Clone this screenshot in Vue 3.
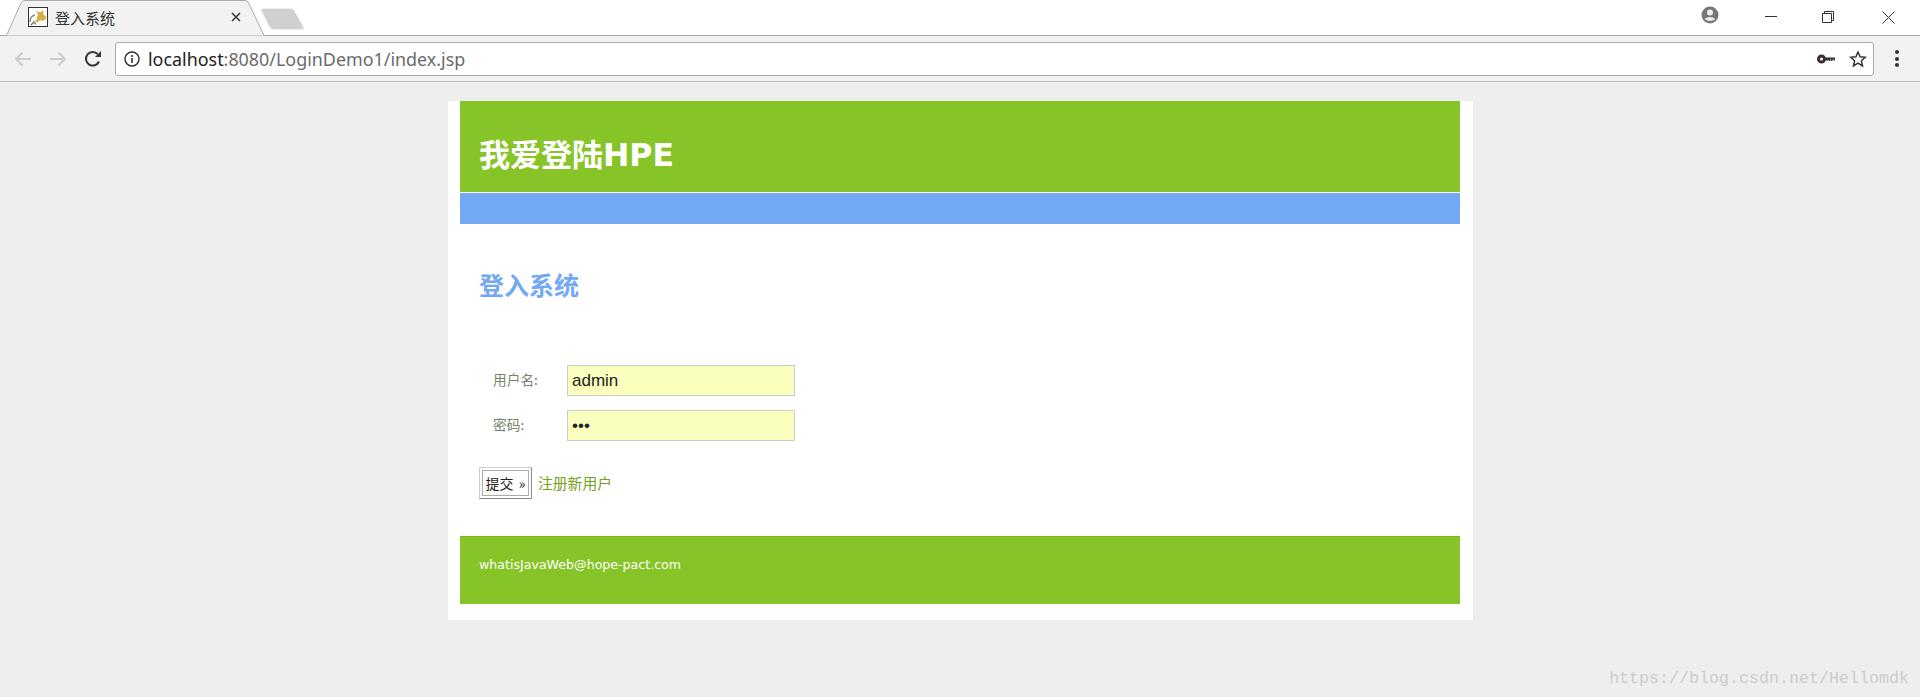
<template>
  <div class="browser">
    <div class="tabstrip">
      <div class="tab">
        <svg class="tab__shape" width="270" height="36" viewBox="0 0 270 36">
          <path d="M0 35.5H6.5L21 3Q22.2.5 25 .5H245Q247.5.5 248.6 3L264 35.5H270" fill="#f2f2f2" stroke="#aaa" />
        </svg>
        <svg class="tab__icon" width="20" height="20" viewBox="0 0 20 20">
          <rect x=".5" y=".5" width="19" height="19" fill="#fff" stroke="#3a3035" />
          <path d="M8 3l2 2h3l2-2 .5 4.500 2.500 2-.5 3-3.500 1.500-1.500-1-3.500 2.500-2.500-1.500 3-2-1-1.500 1.500-2.500z" fill="#d9ae45" />
          <path d="M2 15q0-6 5-7" fill="none" stroke="#8a8a8a" stroke-width="1.500" />
          <path d="M3 18l3-3 2 2.500" fill="none" stroke="#666" stroke-width="1.200" />
        </svg>
        <span class="tab__title">登入系统</span>
        <svg class="tab__close" width="10" height="10" viewBox="0 0 10 10">
          <path d="M1 1l8 8M9 1l-8 8" stroke="#3a3035" stroke-width="1.500" />
        </svg>
      </div>
      <svg class="newtab" width="44" height="22" viewBox="0 0 44 22">
        <path d="M2 1H30Q32 1 33 3L42 19Q43 21 41 21H12Q10 21 9 19L1 3Q0 1 2 1z" fill="#cfcfcf" stroke="#d8d8d8" />
      </svg>
      <div class="winctl">
        <svg width="18" height="18" viewBox="0 0 18 18" class="winctl__user">
          <circle cx="9" cy="9" r="8.500" fill="#777" />
          <circle cx="9" cy="6.500" r="3" fill="#eee" />
          <path d="M3.500 13q5.500-4 11 0q-5.500 4-11 0z" fill="#eee" />
        </svg>
        <svg width="12" height="12" viewBox="0 0 12 12" class="winctl__min">
          <path d="M0 6.500H12" stroke="#333" />
        </svg>
        <svg width="12" height="12" viewBox="0 0 12 12" class="winctl__max">
          <path d="M.5 2.500h9v9h-9zM2.500 2.500v-2h9v9h-2" fill="none" stroke="#333" />
        </svg>
        <svg width="13" height="13" viewBox="0 0 13 13" class="winctl__close">
          <path d="M.5.500l12 12M12.500.500l-12 12" stroke="#333" />
        </svg>
      </div>
    </div>

    <div class="toolbar">
      <svg class="nav nav--back" width="18" height="16" viewBox="0 0 18 16">
        <path d="M17 8H2M8.500 1.500L2 8l6.500 6.500" fill="none" stroke="#ccc" stroke-width="2" />
      </svg>
      <svg class="nav nav--fwd" width="18" height="16" viewBox="0 0 18 16">
        <path d="M1 8h15M9.500 1.500L16 8l-6.500 6.500" fill="none" stroke="#ccc" stroke-width="2" />
      </svg>
      <svg class="nav nav--reload" width="18" height="18" viewBox="0 0 18 18">
        <path d="M15 11.500A6.800 6.800 0 1 1 13.800 4.200" fill="none" stroke="#3a3035" stroke-width="2" />
        <path d="M11 7h6V1z" fill="#3a3035" />
      </svg>
      <div class="omnibox">
        <svg width="16" height="16" viewBox="0 0 16 16">
          <circle cx="8" cy="8" r="7" fill="none" stroke="#3a3035" stroke-width="1.500" />
          <path d="M8 7v5M8 4v2" stroke="#3a3035" stroke-width="1.600" />
        </svg>
        <span class="omnibox__url"><span class="omnibox__host">localhost</span>:8080/LoginDemo1/index.jsp</span>
        <svg class="omnibox__key" width="18" height="10" viewBox="0 0 18 10">
          <circle cx="4.500" cy="5" r="3" fill="none" stroke="#3a3035" stroke-width="3" />
          <path d="M7 3.500h11v3h-1.500V5.500h-1v1.500h-1.500V5.500h-1v1.500H12V6.500H7z" fill="#3a3035" />
        </svg>
        <svg class="omnibox__star" width="18" height="18" viewBox="0 0 18 18">
          <path d="M9 2l2.100 4.800 5.200.500-3.900 3.500 1.100 5.100L9 13.200l-4.500 2.700 1.100-5.100-3.900-3.500 5.200-.500z" fill="none" stroke="#3a3035" stroke-width="1.500" />
        </svg>
      </div>
      <div class="menu"><i></i><i></i><i></i></div>
    </div>
  </div>

  <div class="wrap">
    <div class="header">
      <h1>我爱登陆<span>HPE</span></h1>
    </div>
    <div class="subbar"></div>
    <div class="content">
      <h2>登入系统</h2>
      <div class="fields">
        <div class="field" v-for="f in fields" :key="f.label">
          <label>{{ f.label }}:</label>
          <input :type="f.type" :value="f.value" />
        </div>
      </div>
      <div class="actions">
        <button type="button">提交 »</button>
        <a href="#">注册新用户</a>
      </div>
    </div>
    <div class="footer">whatisJavaWeb@hope-pact.com</div>
  </div>

  <div class="watermark">https://blog.csdn.net/Hellomdk</div>
</template>

<script setup>
const fields = [
  { label: "用户名", type: "text", value: "admin" },
  { label: "密码", type: "password", value: "abc" },
];
</script>

<style>
html,
body {
  margin: 0;
  background: #eee;
  overflow: hidden;
}
</style>

<style scoped>
.browser {
  font-family: "Noto Sans", "Noto Sans CJK SC", sans-serif;
}
.tabstrip {
  position: relative;
  height: 35px;
  background: #fff;
  border-bottom: 1px solid #aaa;
  display: flex;
}
.tab {
  position: relative;
  width: 261px;
  height: 36px;
  display: flex;
  align-items: center;
  padding-left: 28px;
  box-sizing: border-box;
}
.tab__shape {
  position: absolute;
  left: 0;
  top: 0;
}
.tab__icon,
.tab__title,
.tab__close {
  position: relative;
}
.tab__icon {
  margin-top: -2px;
}
.tab__title {
  margin-left: 7px;
  font-size: 15px;
  color: #333;
  font-family: "Noto Sans CJK SC", sans-serif;
  margin-top: -2px;
}
.tab__close {
  margin-left: 116px;
  margin-top: -2px;
}
.newtab {
  margin-top: 8px;
}
.winctl {
  margin-left: auto;
  display: flex;
  align-items: flex-start;
}
.winctl__user {
  margin: 6px 46px 0 0;
}
.winctl__min {
  margin: 10px 45px 0 0;
}
.winctl__max {
  margin: 11px 48px 0 0;
}
.winctl__close {
  margin: 11px 25px 0 0;
}

.toolbar {
  height: 45px;
  background: #f2f2f2;
  border-bottom: 1px solid #bbb;
  display: flex;
  align-items: center;
}
.nav--back {
  margin-left: 14px;
}
.nav--fwd {
  margin-left: 17px;
}
.nav--reload {
  margin-left: 17px;
}
.omnibox {
  margin-left: 13px;
  width: 1759px;
  height: 34px;
  box-sizing: border-box;
  background: #fff;
  border: 1px solid #aaa;
  border-radius: 3px;
  display: flex;
  align-items: center;
  padding-left: 8px;
}
.omnibox__url {
  margin-left: 8px;
  font-size: 17.900px;
  color: #6b6b6b;
}
.omnibox__host {
  color: #222;
}
.omnibox__key {
  margin-left: auto;
}
.omnibox__star {
  margin: 0 6px 0 14px;
}
.menu {
  margin-left: 21px;
  display: flex;
  flex-direction: column;
  gap: 2.500px;
}
.menu i {
  width: 4px;
  height: 4px;
  border-radius: 50%;
  background: #3a3035;
}

.wrap {
  width: 1000px;
  margin: 19px auto 0;
  padding: 0 12.500px 16px;
  background: #fff;
}
.header {
  height: 91px;
  background: #87c427;
  padding: 0 19px;
  box-sizing: border-box;
  display: flex;
  align-items: flex-end;
}
.header h1 {
  margin: 0 0 17px;
  font-family: "Noto Sans CJK SC", sans-serif;
  font-size: 31px;
  line-height: 40px;
  font-weight: 700;
  color: #fff;
}
.header h1 span {
  font-family: "DejaVu Sans", sans-serif;
  font-size: 31.500px;
}
.subbar {
  height: 31px;
  margin-top: 1px;
  background: #73a8f4;
}
.content {
  padding: 0 19px;
  height: 312px;
  box-sizing: border-box;
}
.content h2 {
  margin: 0;
  padding-top: 42px;
  font-family: "Noto Sans CJK SC", sans-serif;
  font-size: 25px;
  line-height: 36px;
  font-weight: 700;
  color: #73a8f4;
}
.fields {
  margin-top: 63px;
  display: flex;
  flex-direction: column;
  gap: 14px;
}
.field {
  display: flex;
  align-items: center;
  padding-left: 14px;
}
.field label {
  width: 74px;
  padding-bottom: 3px;
  font-family: "Noto Sans CJK SC", sans-serif;
  font-size: 13.700px;
  color: #76856a;
}
.field input {
  width: 228px;
  height: 31px;
  box-sizing: border-box;
  margin: 0;
  padding: 0 4px;
  border: 1px solid #ccc;
  background: #faffbd;
  font-family: "Liberation Sans", sans-serif;
  font-size: 17px;
  color: #222;
  outline: none;
}
.actions {
  margin-top: 26px;
  display: flex;
  align-items: center;
}
.actions button {
  width: 53px;
  height: 32px;
  box-sizing: border-box;
  padding: 0;
  background: #fff;
  border: 1px solid #ccc;
  box-shadow: inset 0 0 0 2px #fff, inset 0 0 0 3px #aaa;
  border-right-color: #888;
  border-bottom-color: #888;
  font-family: "Noto Sans CJK SC", sans-serif;
  font-size: 14px;
  color: #222;
  word-spacing: 2px;
}
.actions a {
  margin-left: 6px;
  padding-bottom: 2px;
  font-family: "Noto Sans CJK SC", sans-serif;
  font-size: 14.800px;
  color: #77a01e;
  text-decoration: none;
}
.footer {
  height: 68px;
  box-sizing: border-box;
  background: #87c427;
  border-top: 1px solid #7cb322;
  padding: 19px 19px 0;
  font-family: "DejaVu Sans", sans-serif;
  font-size: 12.600px;
  line-height: 17px;
  color: #fff;
}
.watermark {
  position: absolute;
  right: 11px;
  bottom: 9px;
  font-family: "Liberation Mono", monospace;
  font-size: 16.670px;
  color: #ccc;
}
</style>
